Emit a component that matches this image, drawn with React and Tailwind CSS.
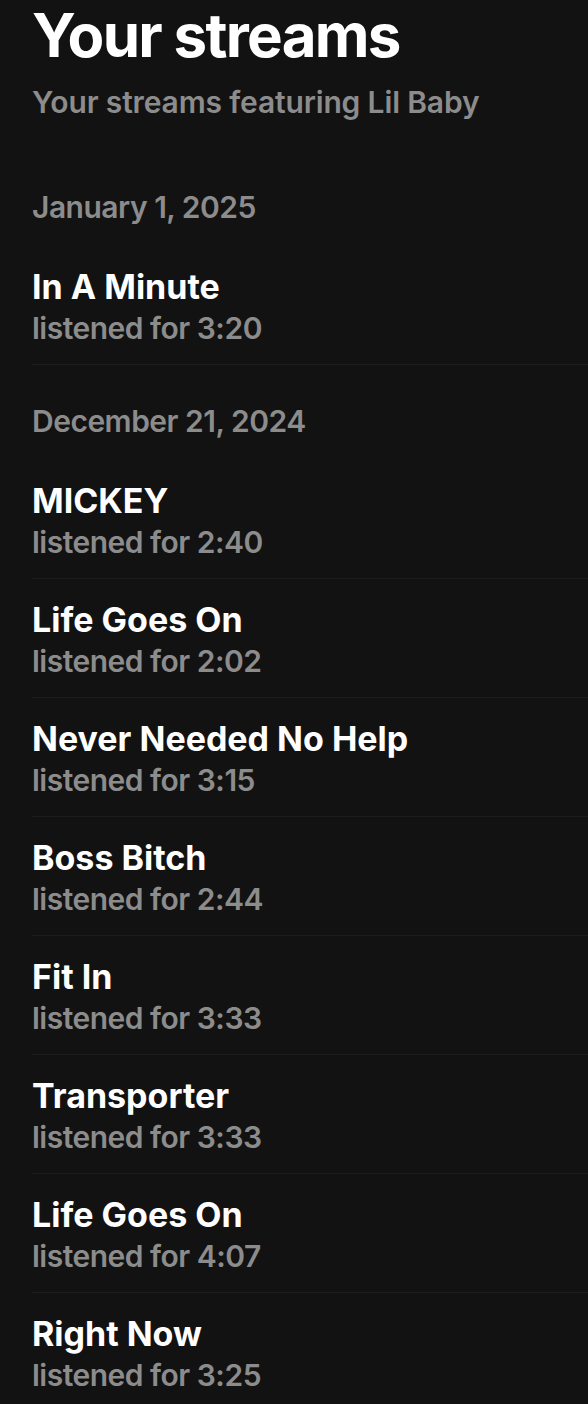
import React from 'react';

const sections = [
    {
        date: 'January 1, 2025',
        streams: [{ title: 'In A Minute', time: '3:20' }],
    },
    {
        date: 'December 21, 2024',
        streams: [
            { title: 'MICKEY', time: '2:40' },
            { title: 'Life Goes On', time: '2:02' },
            { title: 'Never Needed No Help', time: '3:15' },
            { title: 'Boss Bitch', time: '2:44' },
            { title: 'Fit In', time: '3:33' },
            { title: 'Transporter', time: '3:33' },
            { title: 'Life Goes On', time: '4:07' },
            { title: 'Right Now', time: '3:25' },
        ],
    },
];

const App = () => {
    return (
        <div className="min-h-screen bg-[#121212] pl-[32px] overflow-hidden" style={{ fontFamily: 'Inter, sans-serif' }}>
            <h1 className="pt-[2px] text-[60px] leading-[66px] font-bold text-white tracking-[-1.7px]">Your streams</h1>
            <p className="mt-[14px] text-[30px] leading-[40px] font-semibold text-[#8c8c8c] tracking-[-0.15px]">Your streams featuring Lil Baby</p>

            <div className="mt-[65px]">
                {sections.map((section, i) => (
                    <div key={i} className={i > 0 ? 'mt-[36px]' : ''}>
                        <div className="pb-[19px] text-[30px] leading-[40px] font-semibold text-[#8c8c8c] tracking-[-0.5px]">{section.date}</div>
                        {section.streams.map((s, j) => (
                            <div key={j} className="pt-[20px] pb-[16px] border-b border-[#1c1c1c]">
                                <div className="text-[34px] leading-[42px] font-bold text-white">{s.title}</div>
                                <div className="text-[30px] leading-[40px] font-semibold text-[#8c8c8c] tracking-[-0.5px]">listened for {s.time}</div>
                            </div>
                        ))}
                    </div>
                ))}
            </div>
        </div>
    );
};

export default App;
